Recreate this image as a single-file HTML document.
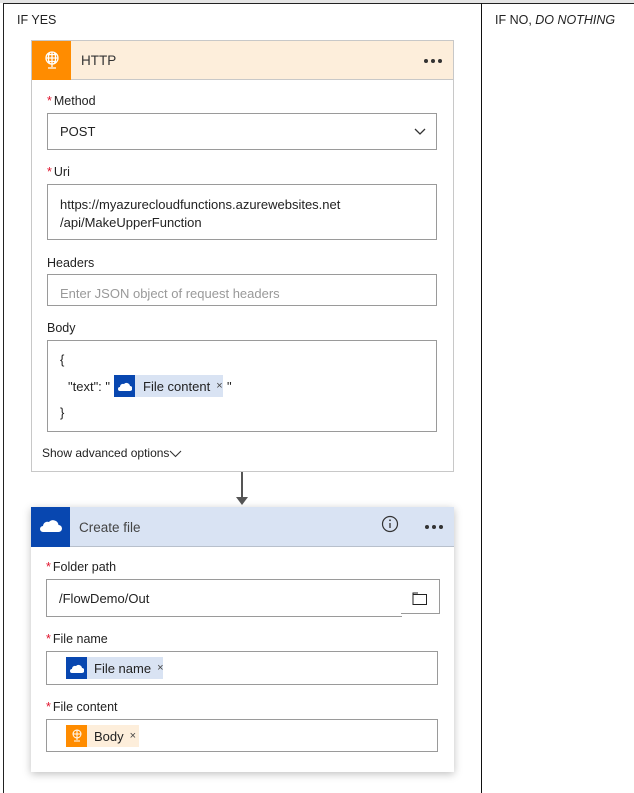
<!DOCTYPE html>
<html><head><meta charset="utf-8"><style>
*{margin:0;padding:0;box-sizing:border-box}
body{width:634px;height:793px;background:#fff;position:relative;overflow:hidden;font-family:"Segoe UI","Liberation Sans",sans-serif;font-size:13px;color:#333}
.a{position:absolute}
.box{position:absolute;border:1px solid #9a9a9a;background:#fff}
.lbl{position:absolute;font-size:12.5px;color:#222;white-space:nowrap}
.lbl b{color:#e0102a;font-weight:normal;margin-right:2px}
.t{position:absolute;font-size:13px;color:#222;white-space:nowrap}
.tok{position:absolute;height:22px;display:flex;align-items:center;font-size:13px;color:#222;white-space:nowrap}
.tok .ic{width:21px;height:22px;display:flex;align-items:center;justify-content:center;flex:none}
.x{font-size:11px;color:#444}
.dots{position:absolute;display:flex;gap:3px}
.dots i{width:4px;height:4px;border-radius:2px;background:#333}
</style></head><body>
<div class="a" style="left:0;top:0;width:634px;height:3px;background:#e4e4e4"></div>
<div class="a" style="left:3px;top:3px;width:631px;height:1px;background:#222"></div>
<div class="a" style="left:3px;top:3px;width:1px;height:790px;background:#222"></div>
<div class="a" style="left:481px;top:3px;width:1px;height:790px;background:#111"></div>
<div class="t" style="left:17px;top:13px;font-size:12.5px">IF YES</div>
<div class="t" style="left:495px;top:13px;font-size:12.5px">IF NO, <i>DO NOTHING</i></div>

<!-- HTTP card -->
<div class="a" style="left:31px;top:40px;width:423px;height:432px;border:1px solid #c8c8c8;background:#fff"></div>
<div class="a" style="left:32px;top:41px;width:421px;height:39px;background:#fdeedb;border-bottom:1px solid #c8c8c8"></div>
<div class="a" style="left:32px;top:41px;width:39px;height:39px;background:#ff8c00"></div>
<svg class="a" style="left:42px;top:50px" width="20" height="22" viewBox="0 0 20 22" fill="none" stroke="#fff" stroke-width="1.3"><circle cx="10" cy="8" r="6"/><path d="M4 8h12M10 2v12M6 4.5h8M6 11.5h8M7.5 2.6c-1.5 3-1.5 7.8 0 10.8M12.5 2.6c1.5 3 1.5 7.8 0 10.8M10 14v3M6 18h8"/></svg>
<div class="t" style="left:81px;top:53px;font-size:13.5px;color:#333">HTTP</div>
<div class="dots" style="left:424px;top:59px"><i></i><i></i><i></i></div>

<div class="lbl" style="left:47px;top:94px"><b>*</b>Method</div>
<div class="box" style="left:47px;top:113px;width:390px;height:37px"></div>
<div class="t" style="left:60px;top:124px">POST</div>
<svg class="a" style="left:414px;top:128px" width="12" height="8"><path d="M1 1l5 5 5-5" stroke="#333" stroke-width="1.3" fill="none"/></svg>

<div class="lbl" style="left:47px;top:165px"><b>*</b>Uri</div>
<div class="box" style="left:47px;top:184px;width:390px;height:56px"></div>
<div class="t" style="left:60px;top:196px;line-height:18px">https://myazurecloudfunctions.azurewebsites.net<br>/api/MakeUpperFunction</div>

<div class="lbl" style="left:47px;top:256px">Headers</div>
<div class="box" style="left:47px;top:274px;width:390px;height:32px"></div>
<div class="t" style="left:60px;top:286px;color:#999">Enter JSON object of request headers</div>

<div class="lbl" style="left:47px;top:321px">Body</div>
<div class="box" style="left:47px;top:340px;width:390px;height:92px"></div>
<div class="t" style="left:60px;top:352px">{</div>
<div class="t" style="left:68px;top:379px">"text": "</div>
<div class="tok" style="left:114px;top:375px;background:#d9e3f3;width:109px"><div class="ic" style="background:#0847b0"><svg width="14" height="9" viewBox="0 0 14 9"><path d="M2 9a2 2 0 0 1 0-4 3 3 0 0 1 4-3 3.5 3.5 0 0 1 6 2 2.5 2.5 0 0 1 0 5z" fill="#fff"/></svg></div><span style="margin-left:8px">File content</span><span class="x" style="margin-left:6px">×</span></div>
<div class="t" style="left:227px;top:379px">"</div>
<div class="t" style="left:60px;top:405px">}</div>
<div class="t" style="left:42px;top:446px;font-size:12px">Show advanced options</div>
<svg class="a" style="left:169px;top:450px" width="13" height="8"><path d="M1 1l5.5 5.5L12 1" stroke="#333" stroke-width="1.1" fill="none"/></svg>

<!-- arrow -->
<div class="a" style="left:241px;top:472px;width:2px;height:27px;background:#555"></div>
<svg class="a" style="left:236px;top:497px" width="12" height="9"><path d="M0 0h12L6 8z" fill="#555"/></svg>

<!-- Create file card -->
<div class="a" style="left:31px;top:507px;width:423px;height:265px;background:#fff;box-shadow:0 2px 8px rgba(0,0,0,.25)"></div>
<div class="a" style="left:31px;top:507px;width:423px;height:40px;background:#d9e3f3;border-bottom:1px solid #b8c0cc"></div>
<div class="a" style="left:31px;top:507px;width:39px;height:40px;background:#0847b0"></div>
<svg class="a" style="left:40px;top:519px" width="22" height="14" viewBox="0 0 22 14"><path d="M3 13a3 3 0 0 1 0-6 4.5 4.5 0 0 1 6-4 5.5 5.5 0 0 1 9.5 3 3.5 3.5 0 0 1 0 7z" fill="#fff"/></svg>
<div class="t" style="left:79px;top:520px;font-size:13.5px;color:#444">Create file</div>
<svg class="a" style="left:381px;top:515px" width="18" height="18"><circle cx="9" cy="9" r="7.5" stroke="#333" stroke-width="1.2" fill="none"/><path d="M9 8v5" stroke="#333" stroke-width="1.3"/><circle cx="9" cy="5.3" r=".9" fill="#333"/></svg>
<div class="dots" style="left:425px;top:525px"><i></i><i></i><i></i></div>

<div class="lbl" style="left:46px;top:560px"><b>*</b>Folder path</div>
<div class="a" style="left:46px;top:579px;width:356px;height:38px;border:1px solid #9a9a9a;border-right:none"></div>
<div class="a" style="left:401px;top:579px;width:39px;height:35px;border:1px solid #9a9a9a;border-left:none"></div>
<div class="t" style="left:59px;top:591px">/FlowDemo/Out</div>
<svg class="a" style="left:412px;top:592px" width="16" height="13"><path d="M1 2.5h13.5v10H1zM1 2.5V1h5" stroke="#222" stroke-width="1" fill="none"/></svg>

<div class="lbl" style="left:46px;top:632px"><b>*</b>File name</div>
<div class="box" style="left:46px;top:651px;width:392px;height:34px"></div>
<div class="tok" style="left:66px;top:657px;background:#d9e3f3;width:97px"><div class="ic" style="background:#0847b0"><svg width="14" height="9" viewBox="0 0 14 9"><path d="M2 9a2 2 0 0 1 0-4 3 3 0 0 1 4-3 3.5 3.5 0 0 1 6 2 2.5 2.5 0 0 1 0 5z" fill="#fff"/></svg></div><span style="margin-left:7px">File name</span><span class="x" style="margin-left:6px">×</span></div>

<div class="lbl" style="left:46px;top:700px"><b>*</b>File content</div>
<div class="box" style="left:46px;top:719px;width:392px;height:33px"></div>
<div class="tok" style="left:66px;top:725px;background:#fdeedb;width:73px"><div class="ic" style="background:#ff8c00"><svg width="12" height="14" viewBox="0 0 12 14" fill="none" stroke="#fff" stroke-width="1"><circle cx="6" cy="5" r="4"/><path d="M2 5h8M6 1v8M6 9v2M3 12h6"/></svg></div><span style="margin-left:7px">Body</span><span class="x" style="margin-left:6px">×</span></div>
</body></html>
